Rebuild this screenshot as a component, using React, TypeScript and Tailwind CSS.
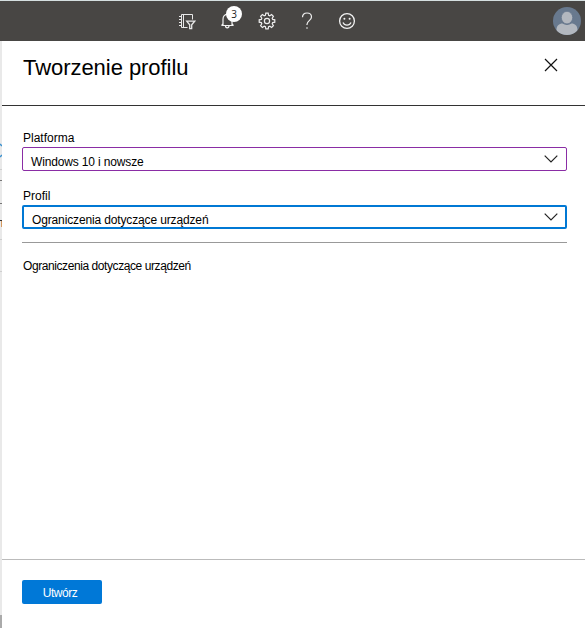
import React from 'react';

const Chevron = () => (
  <svg width="14" height="8" viewBox="0 0 14 8" fill="none" stroke="#222" strokeWidth="1.2" className="shrink-0">
    <path d="M.7.7 7 7 13.3.7" />
  </svg>
);

const FilterDirectory = () => (
  <svg width="17" height="17" viewBox="0 0 17 17" fill="none" stroke="#e8e8e8" strokeWidth="1">
    <path d="M8.5 14.5h-6v-13h11v5M4.500 1.500v13M0 3.500h2.500M0 6.500h2.500M0 9.500h2.500M0 12.500h2.500" />
    <path d="M7.700 8.200h8l-3 3.600v3.800h-2v-3.800z" strokeWidth="1.300" />
  </svg>
);

const Bell = () => (
  <svg width="14" height="16" viewBox="0 0 14 16" fill="none" stroke="#f2f2f2" strokeWidth="1.2">
    <path d="M.5 12.500h12M2 12.500V6.300C2 3.200 3.800 1.400 6.500 1.400S11 3.200 11 6.300v6.200M.6 12.500 2 10.500M12.400 12.500 11 10.500M4.500 12.800c0 2.700 3.500 2.700 3.500 0" />
  </svg>
);

const Gear = () => (
  <svg width="18" height="18" viewBox="0 0 18 18" fill="none" stroke="#eee" strokeWidth="1.2">
    <path d="M7.8 1.2h2.4l.4 2.1 1.2.5 1.8-1.2 1.8 1.8-1.2 1.8.5 1.2 2.1.4v2.4l-2.1.4-.5 1.2 1.2 1.8-1.8 1.8-1.8-1.2-1.2.5-.4 2.1H7.8l-.4-2.1-1.2-.5-1.8 1.2-1.8-1.8 1.2-1.8-.5-1.2-2.1-.4V7.8l2.1-.4.5-1.2-1.2-1.8 1.8-1.8 1.8 1.2 1.2-.5z" />
    <circle cx="9" cy="9" r="2.6" />
  </svg>
);

const Help = () => (
  <svg width="12" height="18" viewBox="0 0 12 18" fill="none" stroke="#eee" strokeWidth="1.2">
    <path d="M1.5 5.2C1.5 2.6 3.4 1 6 1s4.5 1.6 4.5 4c0 3.600-4.500 3.700-4.500 7.300V13M6 15.200v1.600" />
  </svg>
);

const Smile = () => (
  <svg width="18" height="18" viewBox="0 0 18 18" fill="none" stroke="#f2f2f2" strokeWidth="1.3">
    <circle cx="9" cy="9" r="7.4" />
    <path d="M5 10.400c1.600 3.500 6.400 3.500 8 0" />
    <circle cx="6.400" cy="6.800" r="1" fill="#f2f2f2" stroke="none" />
    <circle cx="11.600" cy="6.800" r="1" fill="#f2f2f2" stroke="none" />
  </svg>
);

const Avatar = () => (
  <svg width="28" height="28" viewBox="0 0 28 28">
    <defs>
      <clipPath id="avatar"><circle cx="14" cy="14" r="14" /></clipPath>
    </defs>
    <g clipPath="url(#avatar)">
      <rect width="28" height="28" fill="#68798e" />
      <path d="M3.500 28v-5c0-4 2.500-6.400 6-6.400 2.500 1.900 6.500 1.900 9 0 3.500 0 6 2.400 6 6.400v5z" fill="#b3b8bf" />
      <ellipse cx="14" cy="10.600" rx="5.700" ry="6.300" fill="#b3b8bf" stroke="#68798e" strokeWidth=".8" />
    </g>
  </svg>
);

// Slivers of the page that stay visible to the left of the open panel.
const Backdrop = () => (
  <div className="flex w-[2px] shrink-0 flex-col overflow-hidden bg-[#e9e9e9]">
    <svg width="2" height="574" viewBox="0 41 2 574" fill="none">
      <path d="M0 144l2 2M0 157l2-2" stroke="#3b91cf" strokeWidth="1.5" />
      <path d="M0 169.500h2M0 239.500h2M0 271.500h2" stroke="#cfcfcf" />
      <path d="M0 180.500h2M0 203.500h2" stroke="#777" />
      <path d="M0 220.500h2" stroke="#333" />
      <path d="M1.500 221v6" stroke="#d59a60" />
    </svg>
    <div className="flex-1 bg-[#aaa]" />
  </div>
);

export default function App() {
  return (
    <div className="flex h-[628px] w-[585px] flex-col overflow-hidden bg-white font-['Liberation_Sans',Arial,sans-serif] text-black">
      <header className="flex h-[41px] shrink-0 items-center border-t border-[#d5dfe0] bg-[#484644] pl-[179px] pr-1">
        <div className="flex w-[42px]"><FilterDirectory /></div>
        <div className="relative flex w-[37px]">
          <Bell />
          <span className="absolute -top-[7px] left-[5px] flex h-4 w-4 items-center justify-center rounded-full bg-white font-['Open_Sans',sans-serif] text-[10px] leading-none text-[#222]">3</span>
        </div>
        <div className="flex w-[43px]"><Gear /></div>
        <div className="flex w-[37px]"><Help /></div>
        <Smile />
        <div className="ml-auto"><Avatar /></div>
      </header>
      <div className="flex min-h-0 flex-1">
        <Backdrop />
        <section className="flex min-w-0 flex-1 flex-col">
          <div className="flex h-[65px] shrink-0 justify-between border-b border-[#333] pl-[21px] pr-[27px]">
            <h1 className="pt-[14px] text-[22px] leading-[26px] tracking-[-0.05px] whitespace-nowrap">Tworzenie profilu</h1>
            <svg className="mt-[17px]" width="14" height="14" viewBox="0 0 14 14" stroke="#111" strokeWidth="1.2">
              <path d="M1 1l12 12M13 1L1 13" />
            </svg>
          </div>
          <main className="flex flex-1 flex-col pl-5 pr-[18px] pt-6 text-[12px]">
            <label className="h-[17px] pl-px leading-4">Platforma</label>
            <div className="flex h-6 items-center justify-between rounded-[2px] border border-[#8a2da5] pl-2 pr-2">
              <span className="pt-[5px] leading-4 tracking-[-0.15px]">Windows 10 i nowsze</span>
              <Chevron />
            </div>
            <label className="mt-[17px] h-[17px] pl-px leading-4">Profil</label>
            <div className="flex h-6 items-center justify-between rounded-[2px] border-2 border-[#0078d4] pl-2 pr-[7px]">
              <span className="pt-[5px] leading-4 tracking-[-0.14px]">Ograniczenia dotyczące urządzeń</span>
              <Chevron />
            </div>
            <hr className="mt-[13px] border-[#999]" />
            <p className="mt-[15px] pl-px leading-4 tracking-[-0.42px]">Ograniczenia dotyczące urządzeń</p>
          </main>
          <footer className="flex h-[69px] shrink-0 items-start border-t border-[#bbb] pl-5 pt-5">
            <button className="h-6 w-20 rounded-[2px] bg-[#0078d7] pr-1 pt-0.5 text-[12px] leading-4 tracking-[-0.5px] text-white">Utwórz</button>
          </footer>
        </section>
      </div>
    </div>
  );
}
